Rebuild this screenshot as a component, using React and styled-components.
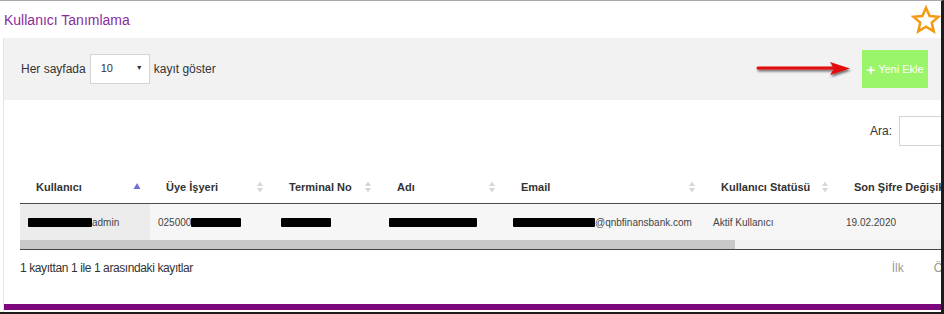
import React from 'react';
import styled, { createGlobalStyle } from 'styled-components'

const GlobalStyle = createGlobalStyle`
  body {
    margin: 0;
    font-family: "Liberation Sans", Arial, sans-serif;
    background: #fff;
  }
`

const columns = [
  { title: 'Kullanıcı', width: 130, sort: 'asc' },
  { title: 'Üye İşyeri', width: 123 },
  { title: 'Terminal No', width: 108 },
  { title: 'Adı', width: 124 },
  { title: 'Email', width: 200 },
  { title: 'Kullanıcı Statüsü', width: 133 },
  { title: 'Son Şifre Değişikliği', width: 160 },
]

const Star = () => (
  <svg width="30" height="30" viewBox="0 0 24 24">
    <path
      d="M12 2.2l2.9 6.6 7.1.6-5.4 4.7 1.6 7-6.2-3.7-6.2 3.7 1.6-7L2 9.4l7.1-.6z"
      fill="none" stroke="#f39a12" strokeWidth="2" strokeLinejoin="miter" />
  </svg>
)

const RedArrow = () => (
  <svg width="100" height="22" viewBox="0 0 100 22" style={{ overflow: 'visible' }}>
    <defs>
      <filter id="sh" x="-10%" y="-50%" width="130%" height="250%">
        <feDropShadow dx="1" dy="2" stdDeviation="1.2" floodColor="#000" floodOpacity="0.55" />
      </filter>
    </defs>
    <g filter="url(#sh)">
      <path d="M2 10h76" stroke="#e30d0d" strokeWidth="3" strokeLinecap="round" />
      <path d="M74 4l20 6.5-20 6.5 4-6.5z" fill="#e30d0d" />
    </g>
  </svg>
)

const SortIcon = ({ dir }) => (
  <svg width="8" height="12" viewBox="0 0 8 12">
    {dir === 'asc'
      ? <path d="M0.5 8l3.5-6 3.5 6z" fill="#6d6fdc" />
      : <>
          <path d="M1 5l3-4.5 3 4.5z" fill="#d6d6d6" />
          <path d="M1 7l3 4.5 3-4.5z" fill="#d6d6d6" />
        </>}
  </svg>
)

const Redact = ({ w, h = 9 }) => <RedactBar style={{ width: w, height: h }} />

function App() {
  return (
    <Frame>
      <GlobalStyle />
      <TitleBar>
        <Title>Kullanıcı Tanımlama</Title>
        <Star />
      </TitleBar>
      <Panel>
        <Toolbar>
          <Length>
            Her sayfada
            <Select>
              <span>10</span>
              <Caret>▼</Caret>
            </Select>
            kayıt göster
          </Length>
          <Actions>
            <RedArrow />
            <AddButton><Plus>+</Plus>Yeni Ekle</AddButton>
          </Actions>
        </Toolbar>
        <Content>
          <SearchRow>
            <label>Ara:</label>
            <SearchInput />
          </SearchRow>
          <TableWrap>
            <Table>
              <colgroup>
                {columns.map(c => <col key={c.title} style={{ width: c.width }} />)}
              </colgroup>
              <thead>
                <tr>
                  {columns.map(c => (
                    <Th key={c.title}>
                      <HeadInner>
                        <span>{c.title}</span>
                        {c.title !== 'Son Şifre Değişikliği' && <SortIcon dir={c.sort} />}
                      </HeadInner>
                    </Th>
                  ))}
                </tr>
              </thead>
              <tbody>
                <tr>
                  <Td $sorted><Redact w={64} />admin</Td>
                  <Td>025000<Redact w={50} /></Td>
                  <Td><Redact w={50} /></Td>
                  <Td><Redact w={88} /></Td>
                  <Td><Redact w={82} />@qnbfinansbank.com</Td>
                  <Td>Aktif Kullanıcı</Td>
                  <Td>19.02.2020</Td>
                </tr>
              </tbody>
            </Table>
            <Scrollbar><Thumb /></Scrollbar>
          </TableWrap>
          <Footer>
            <Info>1 kayıttan 1 ile 1 arasındaki kayıtlar</Info>
            <Pager>
              <PageLink>İlk</PageLink>
              <PageLink>Ö</PageLink>
            </Pager>
          </Footer>
        </Content>
        <PurpleBar />
      </Panel>
    </Frame>
  );
}

const Frame = styled.div`
  width: 944px;
  height: 314px;
  box-sizing: border-box;
  border-top: 1px solid #a8a8a8;
  border-right: 3px solid #1c1c1c;
  border-bottom: 2px solid #1c1c1c;
  overflow: hidden;
  display: flex;
  flex-direction: column;
`
const TitleBar = styled.div`
  height: 37px;
  flex-shrink: 0;
  display: flex;
  align-items: center;
  justify-content: space-between;
  padding: 0 0 0 4px;
`
const Title = styled.h1`
  margin: 0;
  font-size: 14px;
  font-weight: normal;
  color: #8a2d9c;
`
const Panel = styled.div`
  margin-left: 3px;
  flex: 1;
  min-height: 0;
  border-left: 1px solid #e3e3e3;
  display: flex;
  flex-direction: column;
  overflow: hidden;
`
const Toolbar = styled.div`
  height: 62px;
  flex-shrink: 0;
  background: #f2f2f2;
  display: flex;
  align-items: center;
  justify-content: space-between;
  padding: 0 13px 0 17px;
`
const Length = styled.div`
  display: flex;
  align-items: center;
  gap: 4px;
  font-size: 12px;
  color: #333;
`
const Select = styled.div`
  width: 60px;
  height: 30px;
  box-sizing: border-box;
  background: #fff;
  border: 1px solid #d4d4d4;
  display: flex;
  align-items: flex-start;
  justify-content: space-between;
  padding: 7px 6px 0 10px;
  font-size: 11px;
  color: #333;
`
const Caret = styled.span`
  font-size: 7px;
  margin-top: 2px;
`
const Actions = styled.div`
  display: flex;
  align-items: center;
  gap: 6px;
`
const AddButton = styled.button`
  width: 66px;
  height: 38px;
  border: none;
  background: #9bf56b;
  color: #fff;
  font-family: "Liberation Sans", Arial, sans-serif;
  font-size: 11px;
  display: flex;
  align-items: center;
  justify-content: center;
  gap: 3px;
  padding: 0;
`
const Plus = styled.span`
  font-size: 15px;
  font-weight: bold;
  line-height: 1;
`
const Content = styled.div`
  padding-left: 16px;
  display: flex;
  flex-direction: column;
`
const SearchRow = styled.div`
  display: flex;
  align-items: center;
  justify-content: flex-end;
  gap: 7px;
  margin-top: 16px;
  margin-right: -34px;
  font-size: 12px;
  color: #333;
`
const SearchInput = styled.div`
  width: 76px;
  height: 30px;
  box-sizing: border-box;
  border: 1px solid #d4d4d4;
  background: #fff;
`
const TableWrap = styled.div`
  margin-top: 24px;
  overflow: hidden;
  border-bottom: 1px solid #444;
`
const Table = styled.table`
  border-collapse: collapse;
  table-layout: fixed;
  width: 978px;
`
const Th = styled.th`
  height: 33px;
  padding: 0 9px 0 16px;
  text-align: left;
  font-size: 11px;
  font-weight: bold;
  color: #333;
  white-space: nowrap;
  border-bottom: 1px solid #4a4a4a;
`
const HeadInner = styled.div`
  display: flex;
  align-items: center;
  justify-content: space-between;
`
const Td = styled.td`
  height: 36px;
  padding: 0 8px;
  font-size: 10px;
  color: #444;
  white-space: nowrap;
  background: ${p => (p.$sorted ? '#ececec' : '#f6f6f6')};
`
const RedactBar = styled.span`
  display: inline-block;
  vertical-align: middle;
  background: #000;
  border-radius: 1px;
`
const Scrollbar = styled.div`
  height: 9px;
  background: #f0f0f0;
`
const Thumb = styled.div`
  width: 715px;
  height: 100%;
  background: #c8c8c8;
`
const Footer = styled.div`
  display: flex;
  align-items: center;
  justify-content: space-between;
  height: 36px;
  font-size: 12px;
  color: #333;
`
const Info = styled.div`
  letter-spacing: -0.4px;
`
const Pager = styled.div`
  display: flex;
  gap: 30px;
  margin-right: -2px;
`
const PageLink = styled.span`
  color: #999;
  font-size: 12px;
`
const PurpleBar = styled.div`
  margin-top: auto;
  margin-bottom: 2px;
  height: 6px;
  background: #7d077d;
  flex-shrink: 0;
`

export default App;
